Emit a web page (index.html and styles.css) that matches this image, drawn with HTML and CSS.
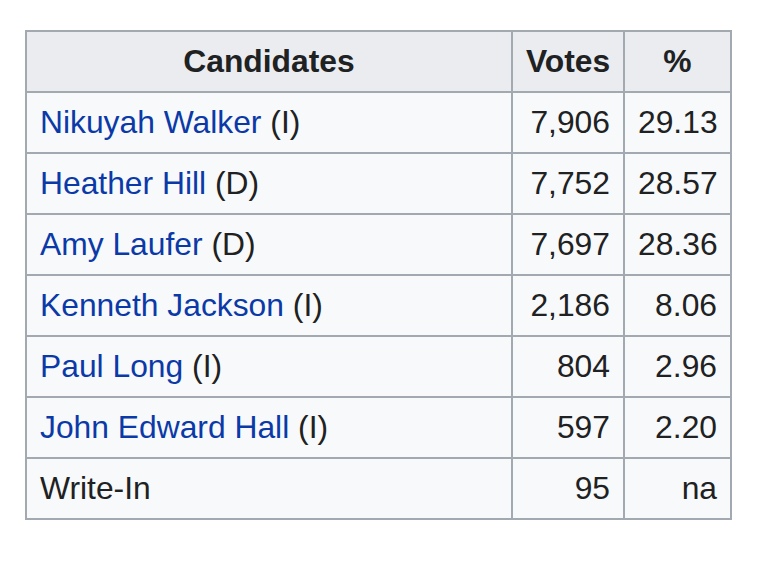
FILE: index.html
```html
<!DOCTYPE html>
<html>
<head>
<meta charset="utf-8">
<link rel="stylesheet" href="styles.css">
</head>
<body>
<div class="page">
<table class="wikitable">
<colgroup><col class="c1"><col class="c2"><col class="c3"></colgroup>
<thead>
<tr><th>Candidates</th><th>Votes</th><th>%</th></tr>
</thead>
<tbody>
<tr><td><a href="#">Nikuyah Walker</a> (I)</td><td class="num">7,906</td><td class="num">29.13</td></tr>
<tr><td><a href="#">Heather Hill</a> (D)</td><td class="num">7,752</td><td class="num">28.57</td></tr>
<tr><td><a href="#">Amy Laufer</a> (D)</td><td class="num">7,697</td><td class="num">28.36</td></tr>
<tr><td><a href="#">Kenneth Jackson</a> (I)</td><td class="num">2,186</td><td class="num">8.06</td></tr>
<tr><td><a href="#">Paul Long</a> (I)</td><td class="num">804</td><td class="num">2.96</td></tr>
<tr><td><a href="#">John Edward Hall</a> (I)</td><td class="num">597</td><td class="num">2.20</td></tr>
<tr><td>Write-In</td><td class="num">95</td><td class="num">na</td></tr>
</tbody>
</table>
</div>
</body>
</html>
```
FILE: styles.css
```css
html, body {
  margin: 0;
  padding: 0;
  background: #ffffff;
}
.page {
  padding: 30px 0 0 25px;
}
.wikitable {
  border-collapse: collapse;
  table-layout: fixed;
  width: 707px;
  background: #f8f9fa;
  color: #202122;
  font-family: "Liberation Sans", Arial, sans-serif;
  font-size: 31.8px;
  line-height: 47px;
  border: 2px solid #a2a9b1;
}
.c1 { width: 486px; }
.c2 { width: 112px; }
.c3 { width: 107px; }
.wikitable th,
.wikitable td {
  border: 2px solid #a2a9b1;
  padding: 6px 13px;
}
.wikitable th {
  background: #eaecf0;
  font-weight: bold;
  text-align: center;
}
.wikitable td {
  text-align: left;
}
.wikitable td.num {
  text-align: right;
}
.wikitable a {
  color: #0b3aa8;
  text-decoration: none;
}
```
